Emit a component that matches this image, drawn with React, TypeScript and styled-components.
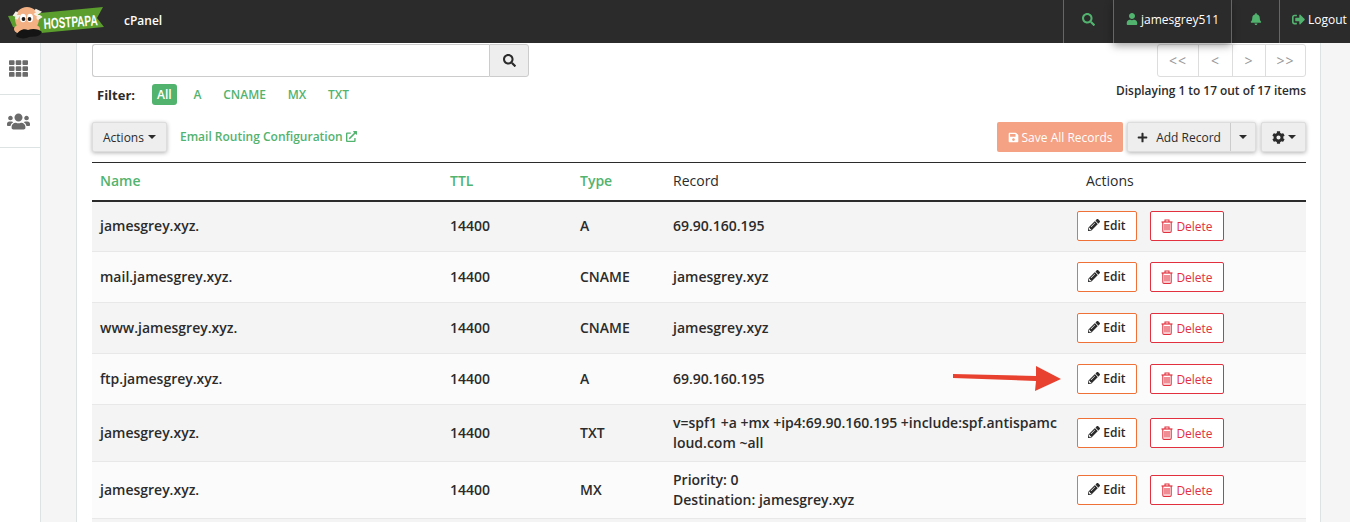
import React from 'react';
import styled, { createGlobalStyle } from 'styled-components';
import {
  FaBell,
  FaCog,
  FaExternalLinkAlt,
  FaPencilAlt,
  FaPlus,
  FaSave,
  FaSearch,
  FaSignOutAlt,
  FaTh,
  FaUser,
  FaUsers,
} from 'react-icons/fa';

const GREEN = '#52b36f';
const DARK = '#2b2b2b';

const records = [
  { name: 'jamesgrey.xyz.', type: 'A', lines: ['69.90.160.195'], height: 51 },
  { name: 'mail.jamesgrey.xyz.', type: 'CNAME', lines: ['jamesgrey.xyz'], height: 51 },
  { name: 'www.jamesgrey.xyz.', type: 'CNAME', lines: ['jamesgrey.xyz'], height: 51 },
  { name: 'ftp.jamesgrey.xyz.', type: 'A', lines: ['69.90.160.195'], height: 51 },
  {
    name: 'jamesgrey.xyz.',
    type: 'TXT',
    lines: ['v=spf1 +a +mx +ip4:69.90.160.195 +include:spf.antispamcloud.com ~all'],
    height: 57,
  },
  {
    name: 'jamesgrey.xyz.',
    type: 'MX',
    lines: ['Priority: 0', 'Destination: jamesgrey.xyz'],
    height: 57,
  },
  { name: 'jamesgrey.xyz.', type: 'MX', lines: ['Priority: 0', 'Destination: jamesgrey.xyz'], height: 57 },
];

const filters = ['A', 'CNAME', 'MX', 'TXT'];
const pages = [
  { label: '<<', width: 40 },
  { label: '<', width: 34 },
  { label: '>', width: 33 },
  { label: '>>', width: 40 },
];

function Logo() {
  return (
    <svg width="104" height="38" viewBox="0 0 104 38">
      <path d="M4 13 L99 4 L93 15 L100 24 L37 30 L9 24 Z" fill="#5b9e2d" />
      <ellipse cx="23" cy="16" rx="12" ry="12" fill="#f2b083" />
      <ellipse cx="23" cy="26" rx="13" ry="6" fill="#f2b083" />
      <path d="M13 9 L11 12 L14 13 L12 16 M31 7 L35 9 L32 11 L36 14 L33 16" stroke="#f4f0e6" strokeWidth="3" fill="none" />
      <ellipse cx="19" cy="15" rx="3" ry="4.2" fill="#fff" />
      <ellipse cx="26" cy="15" rx="3" ry="4.2" fill="#fff" />
      <circle cx="19.5" cy="16" r="1.9" fill="#1d1d1d" />
      <circle cx="25.5" cy="16" r="1.9" fill="#1d1d1d" />
      <path d="M12 33 C14 27 20 25 24 27 C29 25 35 26 38 29 C35 35 29 33 25 34 C22 36 15 36 12 33 Z" fill="#141414" />
      <text
        x="40"
        y="26"
        fill="#fff"
        fontFamily="'Liberation Sans', sans-serif"
        fontSize="15"
        fontWeight="700"
        textLength="54"
        lengthAdjust="spacingAndGlyphs"
        transform="rotate(-4 40 26)"
      >
        HOSTPAPA
      </text>
    </svg>
  );
}

function TrashIcon() {
  return (
    <svg width="12" height="14" viewBox="0 0 12 14" fill="none" stroke="currentColor">
      <path d="M0.5 3 H11.5" strokeWidth="1.2" />
      <path d="M4 3 V1 H8 V3" strokeWidth="1.1" />
      <path d="M1.8 3 V12.2 Q1.8 13.4 3 13.4 H9 Q10.2 13.4 10.2 12.2 V3" strokeWidth="1.1" />
      <path d="M4 5 V11.5 M6 5 V11.5 M8 5 V11.5" strokeWidth="1.1" />
    </svg>
  );
}

function Arrow() {
  return (
    <ArrowMark width="112" height="30" viewBox="0 0 112 30">
      <path d="M2 9 L85 11 L85 1 L110 14 L84 26 L85 16 L2 13 Z" fill="#e8412f" />
    </ArrowMark>
  );
}

export default function App() {
  return (
    <>
      <GlobalStyle />
      <Page>
        <TopBar>
          <LogoLink>
            <Logo />
          </LogoLink>
          <Brand>cPanel</Brand>
          <TopNav>
            <TopCell $width={50}>
              <FaSearch size={13} color={GREEN} />
            </TopCell>
            <UserCell $width={118}>
              <FaUser size={12} color={GREEN} />
              jamesgrey511
            </UserCell>
            <TopCell $width={48}>
              <FaBell size={12} color={GREEN} />
            </TopCell>
            <LogoutCell>
              <FaSignOutAlt size={13} color={GREEN} />
              Logout
            </LogoutCell>
          </TopNav>
        </TopBar>
        <Body>
          <Sidebar>
            <SideItem $height={52}>
              <FaTh size={19} />
            </SideItem>
            <SideItem $height={53}>
              <FaUsers size={23} />
            </SideItem>
          </Sidebar>
          <Panel>
            <TopRow>
              <LeftTools>
                <SearchGroup>
                  <SearchInput />
                  <SearchButton>
                    <FaSearch size={13} />
                  </SearchButton>
                </SearchGroup>
                <FilterRow>
                  <FilterLabel>Filter:</FilterLabel>
                  <FilterActive>All</FilterActive>
                  {filters.map((item) => (
                    <FilterLink key={item}>{item}</FilterLink>
                  ))}
                </FilterRow>
              </LeftTools>
              <RightTools>
                <Pager>
                  {pages.map((item) => (
                    <PageCell key={item.label} $width={item.width}>
                      {item.label}
                    </PageCell>
                  ))}
                </Pager>
                <Displaying>Displaying 1 to 17 out of 17 items</Displaying>
              </RightTools>
            </TopRow>
            <Toolbar>
              <ToolButton>
                Actions <Caret />
              </ToolButton>
              <RoutingLink>
                Email Routing Configuration <FaExternalLinkAlt size={11} />
              </RoutingLink>
              <ToolbarEnd>
                <SaveButton>
                  <FaSave size={11} /> Save All Records
                </SaveButton>
                <SplitGroup>
                  <AddPart>
                    <FaPlus size={11} /> Add Record
                  </AddPart>
                  <CaretPart>
                    <Caret />
                  </CaretPart>
                </SplitGroup>
                <GearButton>
                  <FaCog size={13} /> <Caret />
                </GearButton>
              </ToolbarEnd>
            </Toolbar>
            <TableWrap>
              <Table>
                <colgroup>
                  <col width="350" />
                  <col width="130" />
                  <col width="93" />
                  <col width="404" />
                  <col />
                </colgroup>
                <thead>
                  <tr>
                    <SortHead>Name</SortHead>
                    <SortHead>TTL</SortHead>
                    <SortHead>Type</SortHead>
                    <PlainHead>Record</PlainHead>
                    <ActionsHead>Actions</ActionsHead>
                  </tr>
                </thead>
                <tbody>
                  {records.map((record, index) => (
                    <Row key={index} $odd={index % 2 === 0} $height={record.height}>
                      <Cell>{record.name}</Cell>
                      <Cell>14400</Cell>
                      <Cell>{record.type}</Cell>
                      <RecordCell>
                        {record.lines.map((line) => (
                          <div key={line}>{line}</div>
                        ))}
                      </RecordCell>
                      <ActionCell>
                        <ActionGroup>
                          <EditButton>
                            <FaPencilAlt size={12} /> Edit
                          </EditButton>
                          <DeleteButton>
                            <TrashIcon /> Delete
                          </DeleteButton>
                        </ActionGroup>
                      </ActionCell>
                    </Row>
                  ))}
                </tbody>
              </Table>
              <Arrow />
            </TableWrap>
          </Panel>
        </Body>
      </Page>
    </>
  );
}

const GlobalStyle = createGlobalStyle`
  html, body {
    margin: 0;
    height: 100%;
    overflow: hidden;
    background: #f5f5f5;
    font-family: 'Open Sans', 'Liberation Sans', sans-serif;
    color: #2b2b2b;
  }
  * {
    box-sizing: border-box;
  }
`;

const Page = styled.div`
  width: 1350px;
  height: 522px;
  overflow: hidden;
  display: flex;
  flex-direction: column;
`;

const TopBar = styled.header`
  height: 43px;
  flex: none;
  display: flex;
  align-items: center;
  background: ${DARK};
  color: #fff;
  position: relative;
  z-index: 2;
`;

const LogoLink = styled.a`
  display: flex;
  width: 124px;
  padding-left: 4px;
`;

const Brand = styled.span`
  font-size: 12px;
  font-weight: 600;
  padding-bottom: 2px;
`;

const TopNav = styled.nav`
  margin-left: auto;
  height: 100%;
  display: flex;
`;

const TopCell = styled.div<{ $width: number }>`
  width: ${(p) => p.$width}px;
  height: 100%;
  display: flex;
  align-items: center;
  justify-content: center;
  gap: 3px;
  padding-bottom: 5px;
  border-left: 1px solid #666;
  font-size: 12px;
`;

const UserCell = styled(TopCell)`
  background: ${DARK};
  box-shadow: 0 3px 8px rgba(0, 0, 0, 0.35);
`;

const LogoutCell = styled(TopCell).attrs({ $width: 71 })`
  justify-content: flex-start;
  padding-left: 12px;
`;

const Body = styled.div`
  flex: 1;
  display: flex;
  min-height: 0;
`;

const Sidebar = styled.aside`
  width: 41px;
  flex: none;
  background: #fff;
  border-right: 1px solid #dde3e3;
`;

const SideItem = styled.div<{ $height: number }>`
  height: ${(p) => p.$height}px;
  display: flex;
  align-items: center;
  justify-content: center;
  border-bottom: 1px solid #dde3e3;
  color: #6b6b6b;
  padding-right: 4px;
`;

const Panel = styled.main`
  width: 1245px;
  margin-left: 35px;
  padding: 1px 14px 0 15px;
  background: #fff;
  border-left: 1px solid #dde3e3;
  border-right: 1px solid #dde3e3;
  overflow: hidden;
`;

const TopRow = styled.div`
  display: flex;
  justify-content: space-between;
`;

const LeftTools = styled.div`
  width: 437px;
`;

const SearchGroup = styled.div`
  display: flex;
  height: 33px;
`;

const SearchInput = styled.input`
  flex: 1;
  min-width: 0;
  border: 1px solid #ccc;
  border-right: 0;
  border-radius: 3px 0 0 3px;
  outline: none;
`;

const SearchButton = styled.button`
  width: 40px;
  display: flex;
  align-items: center;
  justify-content: center;
  background: #eee;
  border: 1px solid #ccc;
  border-radius: 0 3px 3px 0;
  color: #2b2b2b;
  padding: 0;
`;

const FilterRow = styled.div`
  display: flex;
  align-items: center;
  margin-top: 7px;
  padding-left: 5px;
  height: 21px;
  font-size: 12px;
  font-weight: 600;
`;

const FilterLabel = styled.span`
  font-size: 13px;
  font-weight: 700;
  width: 55px;
`;

const FilterActive = styled.span`
  height: 21px;
  padding: 0 5px;
  line-height: 21px;
  border-radius: 3px;
  background: ${GREEN};
  color: #fff;
  margin-right: 6px;
`;

const FilterLink = styled.a`
  color: ${GREEN};
  padding: 0 10.9px;
`;

const RightTools = styled.div`
  display: flex;
  flex-direction: column;
  align-items: flex-end;
`;

const Pager = styled.div`
  display: flex;
  height: 33px;
  border: 1px solid #ddd;
  border-radius: 3px;
`;

const PageCell = styled.span<{ $width: number }>`
  width: ${(p) => p.$width}px;
  display: flex;
  align-items: center;
  justify-content: center;
  font-size: 14px;
  color: #999;
  letter-spacing: 1px;
  & + & {
    border-left: 1px solid #ddd;
  }
`;

const Displaying = styled.div`
  margin-top: 5px;
  font-size: 11.9px;
  font-weight: 600;
  line-height: 16px;
`;

const Toolbar = styled.div`
  display: flex;
  align-items: center;
  height: 30px;
  margin-top: 17px;
`;

const ToolButton = styled.button`
  height: 30px;
  padding: 0 10px;
  display: inline-flex;
  align-items: center;
  gap: 4px;
  background: #eee;
  border: 1px solid #ddd;
  border-radius: 2px;
  box-shadow: 0 1px 4px rgba(0, 0, 0, 0.3);
  color: #2b2b2b;
  font: 400 12px 'Open Sans', sans-serif;
`;

const Caret = styled.span`
  display: inline-block;
  border-top: 4px solid #2b2b2b;
  border-left: 4px solid transparent;
  border-right: 4px solid transparent;
`;

const RoutingLink = styled.a`
  margin-left: 13px;
  padding-bottom: 2px;
  display: inline-flex;
  align-items: center;
  gap: 3px;
  color: ${GREEN};
  font-size: 12px;
  font-weight: 600;
`;

const ToolbarEnd = styled.div`
  margin-left: auto;
  display: flex;
  gap: 4px;
`;

const SaveButton = styled.button`
  width: 126px;
  height: 30px;
  display: flex;
  align-items: center;
  justify-content: center;
  gap: 3px;
  background: #f4a283;
  border: 0;
  border-radius: 2px;
  color: #fff;
  padding: 0;
  font: 400 12px 'Open Sans', sans-serif;
`;

const SplitGroup = styled.div`
  display: flex;
  height: 30px;
  background: #eee;
  border: 1px solid #ddd;
  border-radius: 2px;
  box-shadow: 0 1px 4px rgba(0, 0, 0, 0.3);
  font-size: 12px;
`;

const AddPart = styled.span`
  width: 102px;
  display: flex;
  align-items: center;
  justify-content: center;
  gap: 8px;
`;

const CaretPart = styled.span`
  width: 25px;
  display: flex;
  align-items: center;
  justify-content: center;
  border-left: 1px solid #ccc;
`;

const GearButton = styled(ToolButton)`
  width: 45px;
  margin-left: 1px;
  padding: 0;
  justify-content: center;
  gap: 3px;
`;

const TableWrap = styled.div`
  position: relative;
  margin-top: 10px;
`;

const Table = styled.table`
  width: 1214px;
  border-collapse: collapse;
  table-layout: fixed;
  border-top: 1px solid #2b2b2b;
  font-size: 14px;
`;

const SortHead = styled.th`
  height: 38px;
  padding: 0 8px 1px;
  text-align: left;
  color: ${GREEN};
  font-weight: 600;
  border-bottom: 2px solid #2b2b2b;
`;

const PlainHead = styled(SortHead)`
  color: #2b2b2b;
  font-weight: 400;
`;

const ActionsHead = styled(PlainHead)`
  padding-left: 17px;
`;

const Row = styled.tr<{ $odd: boolean; $height: number }>`
  height: ${(p) => p.$height}px;
  background: ${(p) => (p.$odd ? '#f4f4f4' : '#fbfbfb')};
  border-bottom: 1px solid #e8e8e8;
`;

const Cell = styled.td`
  padding: 0 8px 2px;
  font-weight: 600;
`;

const RecordCell = styled(Cell)`
  padding: 0 10px 1px 8px;
  line-height: 20px;
  word-break: break-all;
`;

const ActionCell = styled.td`
  padding: 0 8px;
`;

const ActionGroup = styled.div`
  display: flex;
  gap: 13px;
`;

const EditButton = styled.button`
  width: 60px;
  height: 30px;
  display: flex;
  align-items: center;
  justify-content: center;
  gap: 3px;
  padding: 0 0 2px;
  background: #fff;
  border: 1px solid #f07138;
  border-radius: 2px;
  color: #2b2b2b;
  font: 600 12px 'Open Sans', sans-serif;
`;

const DeleteButton = styled(EditButton)`
  width: 74px;
  padding: 0;
  border-color: #e2303f;
  color: #e2303f;
  font-weight: 400;
`;

const ArrowMark = styled.svg`
  position: absolute;
  left: 859px;
  top: 203px;
`;
